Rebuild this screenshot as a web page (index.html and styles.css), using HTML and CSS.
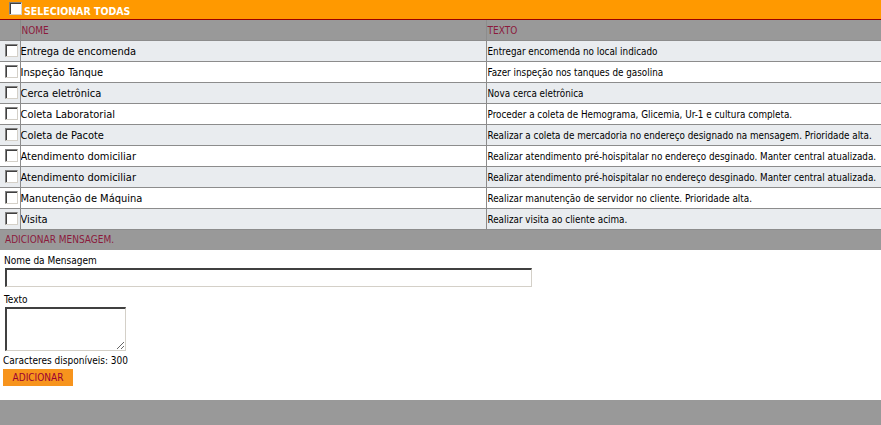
FILE: index.html
```html
<!DOCTYPE html>
<html lang="pt">
<head>
<meta charset="utf-8">
<title>Mensagens</title>
<link rel="stylesheet" href="styles.css">
</head>
<body>
<div class="topbar"><span class="cb"></span><span class="topbar-label">SELECIONAR TODAS</span></div>
<table class="grid">
  <colgroup><col class="c-check"><col class="c-name"><col class="c-text"></colgroup>
  <thead>
    <tr><th></th><th>NOME</th><th>TEXTO</th></tr>
  </thead>
  <tbody>
    <tr class="alt"><td><span class="cb"></span></td><td class="name">Entrega de encomenda</td><td class="txt">Entregar encomenda no local indicado</td></tr>
    <tr><td><span class="cb"></span></td><td class="name">Inspeção Tanque</td><td class="txt">Fazer inspeção nos tanques de gasolina</td></tr>
    <tr class="alt"><td><span class="cb"></span></td><td class="name">Cerca eletrônica</td><td class="txt">Nova cerca eletrônica</td></tr>
    <tr><td><span class="cb"></span></td><td class="name">Coleta Laboratorial</td><td class="txt">Proceder a coleta de Hemograma, Glicemia, Ur-1 e cultura completa.</td></tr>
    <tr class="alt"><td><span class="cb"></span></td><td class="name">Coleta de Pacote</td><td class="txt">Realizar a coleta de mercadoria no endereço designado na mensagem. Prioridade alta.</td></tr>
    <tr><td><span class="cb"></span></td><td class="name">Atendimento domiciliar</td><td class="txt">Realizar atendimento pré-hoispitalar no endereço desginado. Manter central atualizada.</td></tr>
    <tr class="alt"><td><span class="cb"></span></td><td class="name">Atendimento domiciliar</td><td class="txt">Realizar atendimento pré-hoispitalar no endereço desginado. Manter central atualizada.</td></tr>
    <tr><td><span class="cb"></span></td><td class="name">Manutenção de Máquina</td><td class="txt">Realizar manutenção de servidor no cliente. Prioridade alta.</td></tr>
    <tr class="alt"><td><span class="cb"></span></td><td class="name">Visita</td><td class="txt">Realizar visita ao cliente acima.</td></tr>
  </tbody>
</table>
<div class="section-bar">ADICIONAR MENSAGEM.</div>
<form class="form">
  <label class="lbl" for="nome">Nome da Mensagem</label>
  <input class="inp" id="nome" type="text">
  <label class="lbl lbl-texto" for="texto">Texto</label>
  <textarea class="ta" id="texto"></textarea>
  <div class="count">Caracteres disponíveis: 300</div>
  <button class="btn" type="button">ADICIONAR</button>
</form>
<div class="footer"></div>
</body>
</html>
```
FILE: styles.css
```css
* { box-sizing: border-box; }
body {
  margin: 0;
  background: #fff;
  font-family: "DejaVu Sans Condensed", "DejaVu Sans", sans-serif;
  font-size: 11px;
  color: #000;
}
.cb {
  display: inline-block;
  width: 13px;
  height: 13px;
  background: #fff;
  border-top: 1px solid #808080;
  border-left: 1px solid #808080;
  border-right: 1px solid #d4d0c8;
  border-bottom: 1px solid #d4d0c8;
  box-shadow: inset 1px 1px 0 #404040, inset -1px -1px 0 #fff;
  vertical-align: middle;
}
.topbar {
  height: 20px;
  background: #ff9900;
  border-bottom: 1px solid #990000;
  display: flex;
  align-items: center;
  padding-left: 9px;
}
.topbar .cb { margin-top: -3px; }
.topbar-label {
  color: #fff;
  font-weight: bold;
  font-size: 10.5px;
  margin-left: 2px;
  margin-top: 2px;
}
.grid {
  width: 100%;
  border-collapse: collapse;
  table-layout: fixed;
}
.c-check { width: 20px; }
.c-name { width: 466px; }
.grid th, .grid td {
  height: 21px;
  padding: 0;
  border-bottom: 1px solid #8c8c8c;
  border-right: 1px solid #8c8c8c;
  vertical-align: middle;
  text-align: left;
  white-space: nowrap;
  overflow: hidden;
}
.grid th:last-child, .grid td:last-child { border-right: none; }
.grid thead th {
  background: #999;
  color: #8b1a3c;
  font-weight: normal;
  font-size: 10px;
  height: 20px;
  padding-left: 1px;
  padding-top: 1px;
}
.grid tbody tr { background: #fff; }
.grid tbody tr.alt { background: #e9ecef; }
.grid td:first-child { padding-left: 5px; }
.grid td:first-child .cb { display: block; }
.grid td.name { font-size: 11px; padding-left: 0; padding-top: 1px; }
.grid td.txt { font-size: 9.8px; padding-left: 1px; padding-top: 1px; }
.section-bar {
  height: 20px;
  background: #999;
  color: #8b1a3c;
  font-size: 10px;
  display: flex;
  align-items: center;
  padding-left: 5px;
}
.form {
  display: flex;
  flex-direction: column;
  align-items: flex-start;
  padding: 5px 0 14px 3px;
}
.lbl { font-size: 10px; margin-left: 1px; }
.lbl-texto { margin-top: 7px; }
.inp {
  width: 527px;
  height: 19px;
  margin: 2px 0 0 2px;
  border-top: 2px solid #404040;
  border-left: 2px solid #404040;
  border-right: 1px solid #d4d0c8;
  border-bottom: 1px solid #d4d0c8;
  background: #fff;
  padding: 0;
}
.ta {
  width: 121px;
  height: 44px;
  margin: 2px 0 0 2px;
  border-top: 2px solid #404040;
  border-left: 2px solid #404040;
  border-right: 1px solid #d4d0c8;
  border-bottom: 1px solid #d4d0c8;
  background: #fff;
  padding: 0;
}
.count { font-size: 10px; margin-top: 4px; margin-left: 0; }
.btn {
  margin-top: 3px;
  height: 17px;
  width: 70px;
  background: #f7941d;
  border: none;
  color: #990033;
  font-family: "DejaVu Sans Condensed", "DejaVu Sans", sans-serif;
  font-size: 10px;
  padding: 0;
}
.footer {
  height: 25px;
  background: #999;
}
```
